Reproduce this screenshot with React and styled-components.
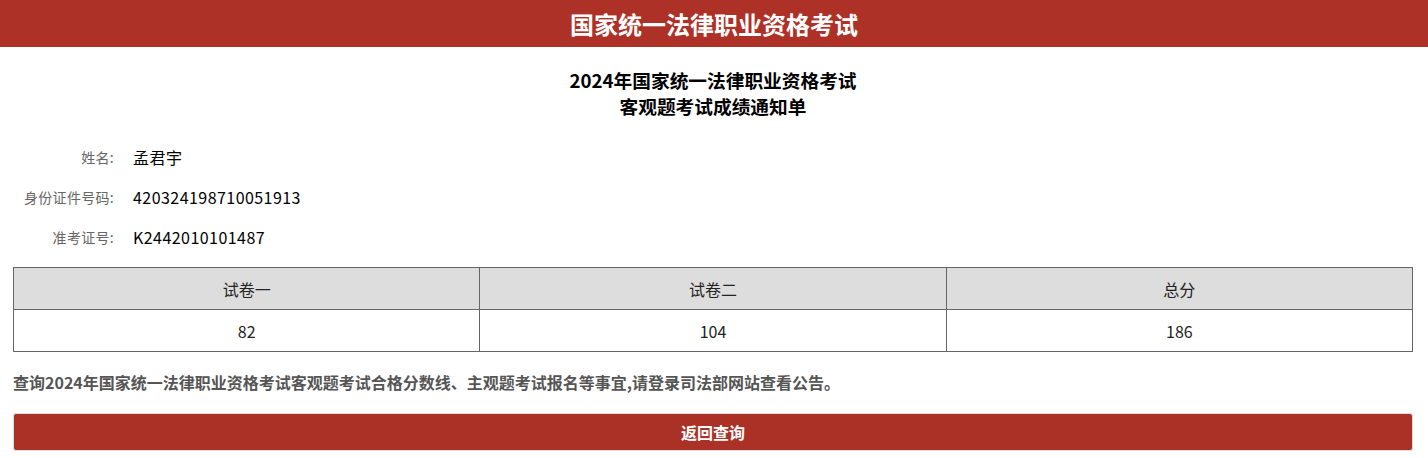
import React from "react";
import styled, { createGlobalStyle } from "styled-components";

const Global = createGlobalStyle`
  html, body { margin: 0; padding: 0; background: #fff; }
  body { font-family: "Noto Sans CJK SC", "Noto Sans", sans-serif; color: #000; }
  * { box-sizing: border-box; }
`;

const Header = styled.header`
  height: 47px;
  background: #ae3127;
  color: #fff;
  display: flex;
  align-items: center;
  justify-content: center;
  font-size: 24px;
  font-weight: 700;
`;

const Main = styled.main`
  padding: 0 15px 0 13px;
`;

const Title = styled.h1`
  margin: 20px 0 0;
  text-align: center;
  font-size: 18.7px;
  font-weight: 700;
  line-height: 26px;
  color: #000;
`;

const Info = styled.div`
  margin-top: 18px;
  display: flex;
  flex-direction: column;
`;

const InfoRow = styled.div`
  display: grid;
  grid-template-columns: 101px 1fr;
  column-gap: 19px;
  align-items: center;
  height: 40px;
`;

const Label = styled.span`
  text-align: right;
  font-size: 14px;
  letter-spacing: 0.3px;
  color: #666;
`;

const Value = styled.span`
  font-size: 16px;
  letter-spacing: 0.45px;
  color: #000;
`;

const Table = styled.table`
  margin-top: 10px;
  width: 100%;
  border-collapse: collapse;
  table-layout: fixed;
`;

const Cell = styled.td`
  border: 1px solid #666;
  height: 42px;
  text-align: center;
  font-size: 16px;
  color: #222;
  background: ${(p) => (p.$head ? "#dddddd" : "#fff")};
`;

const Notice = styled.p`
  margin: 18px 0 0;
  font-size: 16px;
  font-weight: 700;
  line-height: 24px;
  color: #555;
`;

const Button = styled.button`
  display: block;
  width: 100%;
  margin-top: 19px;
  height: 38px;
  border: 1px solid #ddd;
  border-radius: 3px;
  background: #ab3127;
  color: #fff;
  font-family: inherit;
  font-size: 16px;
  font-weight: 700;
  cursor: pointer;
`;

const info = [
  ["姓名:", "孟君宇"],
  ["身份证件号码:", "420324198710051913"],
  ["准考证号:", "K2442010101487"],
];

export default function App() {
  return (
    <>
      <Global />
      <Header>国家统一法律职业资格考试</Header>
      <Main>
        <Title>
          2024年国家统一法律职业资格考试
          <br />
          客观题考试成绩通知单
        </Title>
        <Info>
          {info.map(([l, v]) => (
            <InfoRow key={l}>
              <Label>{l}</Label>
              <Value>{v}</Value>
            </InfoRow>
          ))}
        </Info>
        <Table>
          <tbody>
            <tr>
              <Cell $head>试卷一</Cell>
              <Cell $head>试卷二</Cell>
              <Cell $head>总分</Cell>
            </tr>
            <tr>
              <Cell>82</Cell>
              <Cell>104</Cell>
              <Cell>186</Cell>
            </tr>
          </tbody>
        </Table>
        <Notice>
          查询2024年国家统一法律职业资格考试客观题考试合格分数线、主观题考试报名等事宜,请登录司法部网站查看公告。
        </Notice>
        <Button type="button">返回查询</Button>
      </Main>
    </>
  );
}
